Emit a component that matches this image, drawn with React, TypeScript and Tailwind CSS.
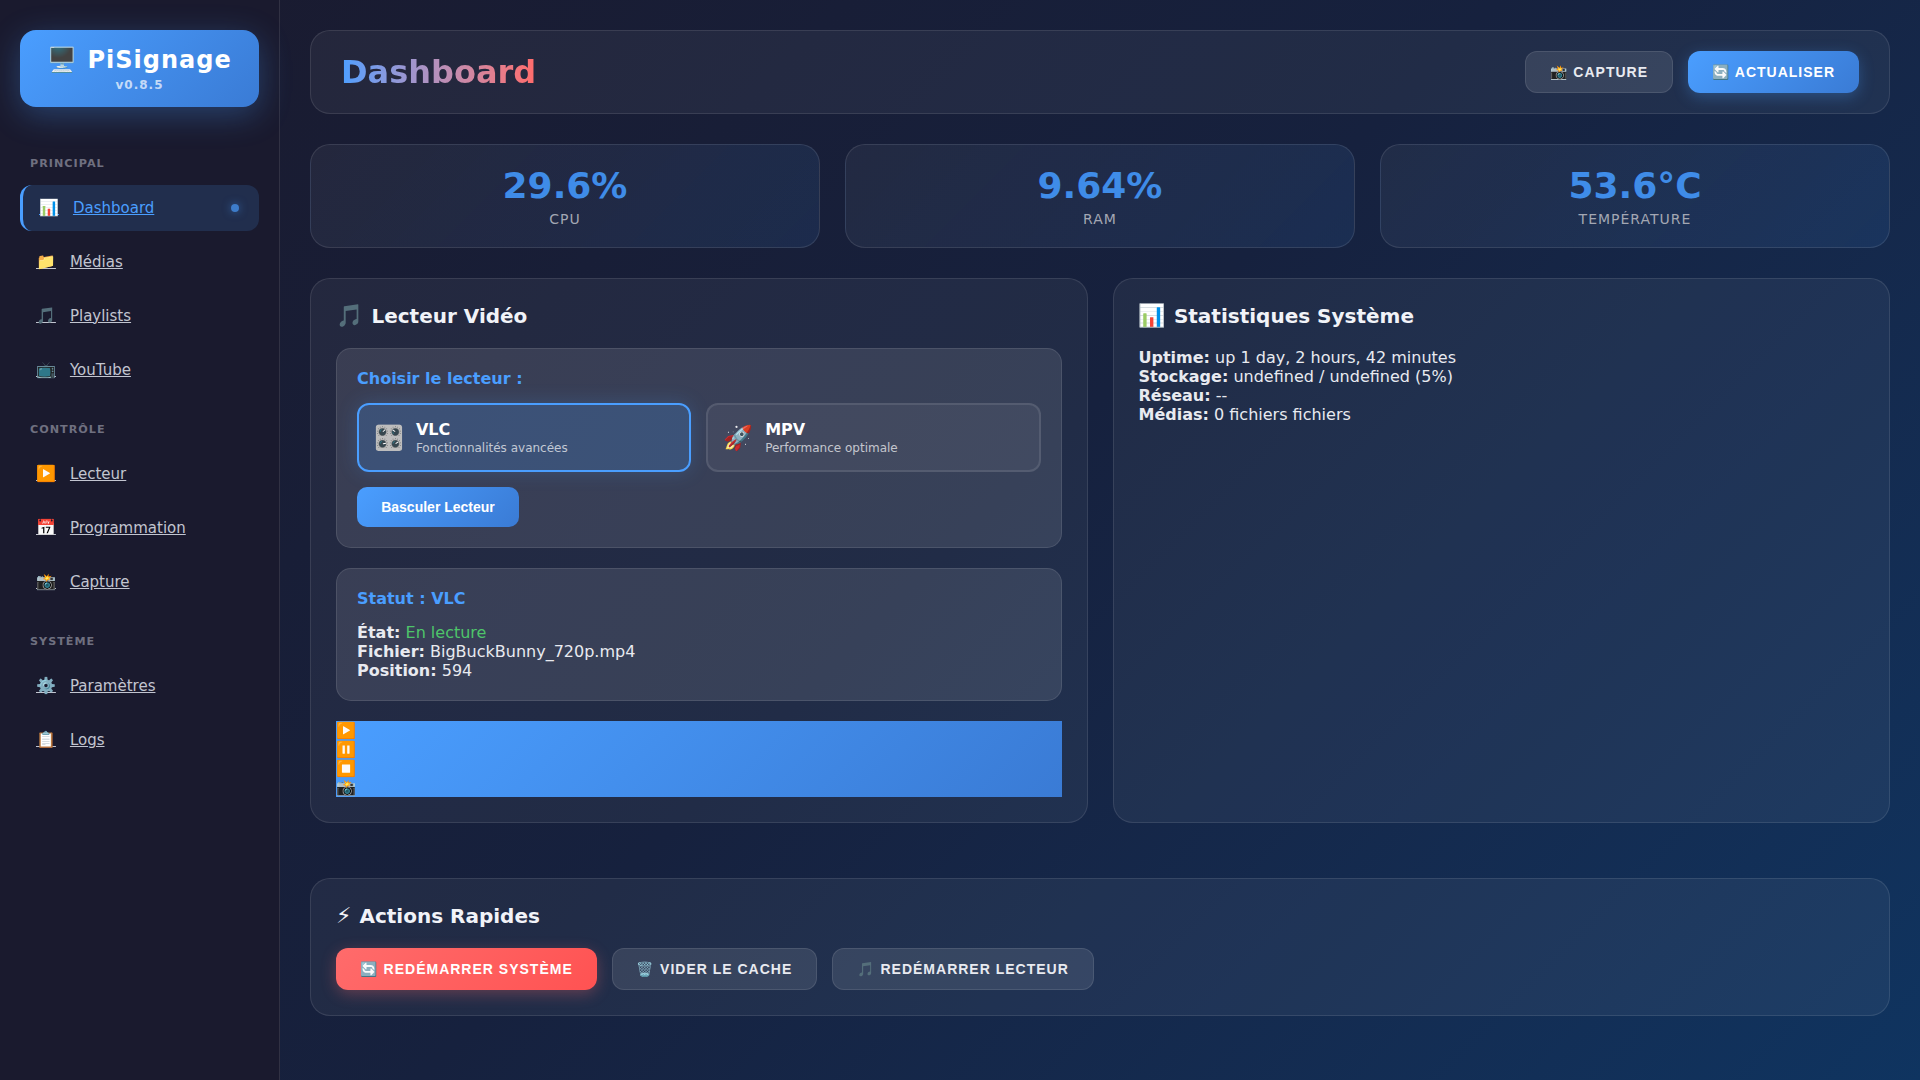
const FONT = '[font-family:"DejaVu_Sans","Noto_Color_Emoji",sans-serif]';
const BTN_FONT = '[font-family:"Liberation_Sans","Noto_Color_Emoji",sans-serif]';

const navSections = [
  {
    title: 'PRINCIPAL',
    items: [
      { icon: '📊', label: 'Dashboard', active: true },
      { icon: '📁', label: 'Médias' },
      { icon: '🎵', label: 'Playlists' },
      { icon: '📺', label: 'YouTube' },
    ],
  },
  {
    title: 'CONTRÔLE',
    items: [
      { icon: '▶️', label: 'Lecteur' },
      { icon: '📅', label: 'Programmation' },
      { icon: '📸', label: 'Capture' },
    ],
  },
  {
    title: 'SYSTÈME',
    items: [
      { icon: '⚙️', label: 'Paramètres' },
      { icon: '📋', label: 'Logs' },
    ],
  },
];

const stats = [
  { value: '29.6%', label: 'CPU' },
  { value: '9.64%', label: 'RAM' },
  { value: '53.6°C', label: 'TEMPÉRATURE' },
];

const card = 'rounded-[20px] border border-white/10 bg-white/5';
const panel = 'rounded-[15px] border border-white/10 bg-white/10 p-5';
const cardTitle = 'mb-5 flex items-center gap-2 text-xl leading-6 font-bold text-[#f1f3f8]';
const ghostBtn = `${BTN_FONT} flex h-[42px] items-center justify-center rounded-xl border border-white/10 bg-white/10 text-sm font-bold tracking-[1px] text-[#e8eaf0]`;

function Sidebar() {
  return (
    <aside className="flex w-[280px] shrink-0 flex-col border-r border-white/10 bg-[#1a1a2e] p-5 pt-[30px]">
      <div className="flex h-[77px] flex-col items-center justify-center rounded-2xl bg-linear-135 from-[#4a9eff] to-[#3a7bd5] shadow-[0_8px_32px_rgba(74,158,255,0.3)]">
        <div className="text-2xl leading-7 font-bold tracking-[1px] text-white">🖥️ PiSignage</div>
        <div className="mt-1 text-xs leading-[14px] font-bold tracking-[1px] text-white/70">v0.8.5</div>
      </div>
      <nav className="mt-[50px] flex flex-col">
        {navSections.map((section) => (
          <div key={section.title} className="mb-[22px]">
            <div className="mb-[15px] px-2.5 text-[11.2px] leading-[13px] font-bold tracking-[1px] text-[#6f7080]">
              {section.title}
            </div>
            {section.items.map((item) => (
              <a
                key={item.label}
                href="#"
                className={
                  item.active
                    ? 'relative mb-2 flex h-[46px] items-center gap-[14px] rounded-xl border-l-[3px] border-[#4a9eff] bg-[#4a9eff]/15 pl-4 text-[15px] text-[#4a9eff] underline'
                    : 'mb-2 flex h-[46px] items-center gap-[14px] rounded-xl pl-4 text-[15px] text-[#c2c5d0] underline'
                }
              >
                <span className="text-base leading-5">{item.icon}</span>
                <span>{item.label}</span>
                {item.active && (
                  <span className="absolute top-1/2 right-5 size-2 -translate-y-1/2 rounded-full bg-[#4a9eff]/70 shadow-[0_0_8px_rgba(74,158,255,0.5)]" />
                )}
              </a>
            ))}
          </div>
        ))}
      </nav>
    </aside>
  );
}

function Header() {
  return (
    <header className={`${card} flex h-[84px] items-center justify-between px-[30px]`}>
      <h1 className="bg-linear-to-r from-[#4a9eff] to-[#ff6b6b] bg-clip-text text-[32px] leading-[37px] font-bold text-transparent">
        Dashboard
      </h1>
      <div className="flex gap-[15px]">
        <button className={`${ghostBtn} w-[148px]`}>📸 CAPTURE</button>
        <button
          className={`${BTN_FONT} flex h-[42px] w-[171px] items-center justify-center rounded-xl bg-linear-135 from-[#4a9eff] to-[#3a7bd5] text-sm font-bold tracking-[1px] text-white shadow-[0_4px_15px_rgba(74,158,255,0.3)]`}
        >
          🔄 ACTUALISER
        </button>
      </div>
    </header>
  );
}

function PlayerCard() {
  return (
    <section className={`${card} h-[545px] p-[25px]`}>
      <h3 className={cardTitle}>
        <span className="text-[22px]">🎵</span>
        <span>Lecteur Vidéo</span>
      </h3>
      <div className={`${panel} mb-5 h-[200px]`}>
        <h4 className="mb-[15px] text-base leading-[19px] font-bold text-[#4a9eff]">Choisir le lecteur :</h4>
        <div className="mb-[15px] grid grid-cols-2 gap-[15px]">
          <div className="flex h-[69px] items-center gap-3 rounded-xl border-2 border-[#4a9eff] bg-[#4a9eff]/20 px-[15px] shadow-[0_0_20px_rgba(74,158,255,0.2)]">
            <span className="text-2xl leading-none">🎛️</span>
            <div>
              <div className="text-base leading-[19px] font-bold text-white">VLC</div>
              <div className="mt-0.5 text-xs leading-[14px] text-white/70">Fonctionnalités avancées</div>
            </div>
          </div>
          <div className="flex h-[69px] items-center gap-3 rounded-xl border-2 border-white/10 bg-white/5 px-[15px]">
            <span className="text-2xl leading-none">🚀</span>
            <div>
              <div className="text-base leading-[19px] font-bold text-white">MPV</div>
              <div className="mt-0.5 text-xs leading-[14px] text-white/70">Performance optimale</div>
            </div>
          </div>
        </div>
        <button
          className={`${BTN_FONT} h-10 w-[162px] rounded-[10px] bg-linear-135 from-[#4a9eff] to-[#3a7bd5] text-sm font-bold text-white`}
        >
          Basculer Lecteur
        </button>
      </div>
      <div className={`${panel} mb-5 h-[133px]`}>
        <h4 className="mb-[15px] text-base leading-[19px] font-bold text-[#4a9eff]">Statut : VLC</h4>
        <div className="text-base leading-[19px] text-[#e8eaf0]">
          <strong>État:</strong> <span className="text-[#4ec56a]">En lecture</span>
          <br />
          <strong>Fichier:</strong> BigBuckBunny_720p.mp4
          <br />
          <strong>Position:</strong> 594
        </div>
      </div>
      <div className="flex h-[76px] flex-col items-start bg-linear-135 from-[#4a9eff] to-[#3a7bd5] text-base leading-[19px]">
        <span>▶️</span>
        <span>⏸️</span>
        <span>⏹️</span>
        <span>📸</span>
      </div>
    </section>
  );
}

function StatsCard() {
  return (
    <section className={`${card} h-[545px] p-[25px]`}>
      <h3 className={cardTitle}>
        <span className="text-[22px]">📊</span>
        <span>Statistiques Système</span>
      </h3>
      <div className="text-base leading-[19px] text-[#e8eaf0]">
        <strong>Uptime:</strong> up 1 day, 2 hours, 42 minutes
        <br />
        <strong>Stockage:</strong> undefined / undefined (5%)
        <br />
        <strong>Réseau:</strong> --
        <br />
        <strong>Médias:</strong> 0 fichiers fichiers
      </div>
    </section>
  );
}

export default function App() {
  return (
    <div className={`${FONT} flex min-h-screen bg-linear-135 from-[#1a1a2e] via-[#16213e] to-[#0f3460]`}>
      <Sidebar />
      <main className="flex min-w-0 flex-1 flex-col p-[30px]">
        <Header />
        <div className="mt-[30px] grid grid-cols-3 gap-[25px]">
          {stats.map((s) => (
            <div
              key={s.label}
              className="flex h-[104px] flex-col items-center justify-center rounded-[20px] border border-white/10 bg-linear-135 from-white/5 to-[#4a9eff]/10"
            >
              <div className="text-4xl leading-[42px] font-bold text-[#3f8ce8]">{s.value}</div>
              <div className="mt-1 text-sm leading-4 tracking-[1px] text-[#a3a7b3]">{s.label}</div>
            </div>
          ))}
        </div>
        <div className="mt-[30px] grid grid-cols-2 gap-[25px]">
          <PlayerCard />
          <StatsCard />
        </div>
        <section className={`${card} mt-[55px] h-[138px] p-[25px]`}>
          <h3 className={cardTitle}>
            <span className="text-[22px]">⚡</span>
            <span>Actions Rapides</span>
          </h3>
          <div className="flex gap-[15px]">
            <button
              className={`${BTN_FONT} flex h-[42px] w-[261px] items-center justify-center rounded-xl bg-linear-135 from-[#ff6b6b] to-[#ff5252] text-sm font-bold tracking-[1px] text-white shadow-[0_4px_15px_rgba(255,107,107,0.3)]`}
            >
              🔄 REDÉMARRER SYSTÈME
            </button>
            <button className={`${ghostBtn} w-[205px]`}>🗑️ VIDER LE CACHE</button>
            <button className={`${ghostBtn} w-[262px]`}>🎵 REDÉMARRER LECTEUR</button>
          </div>
        </section>
      </main>
    </div>
  );
}
